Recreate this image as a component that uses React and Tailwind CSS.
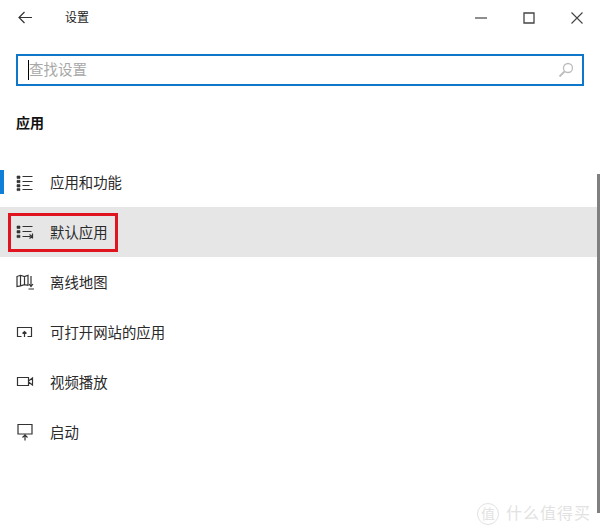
import React from "react";

const cjk = "font-['Liberation_Sans','Noto_Sans_CJK_SC',sans-serif]";

const AppsIcon = () => (
  <svg width="18" height="18" viewBox="0 0 18 18" fill="none" stroke="#333" strokeWidth="1.2">
    <path d="M1 2h3v2.4H1zM1 6.3h3v2.4H1zM1 10.6h3V13H1zM1 14.6h3v2H1z" fill="#333" strokeWidth="0.6" />
    <path d="M6.5 2.5h10M6.5 7.5h10M6.5 11.5h7M6.5 15.5h10" />
  </svg>
);

const DefaultsIcon = () => (
  <svg width="18" height="18" viewBox="0 0 18 18" fill="none" stroke="#333" strokeWidth="1.2">
    <path d="M1 3h3v2.4H1zM1 7.6h3V10H1zM1 12.2h3v2.4H1z" fill="#333" strokeWidth="0.6" />
    <path d="M6.5 3.5h10M6.5 8.5h9M6.5 13.5h8M13.5 11.5l2.5 2-2.5 2M16.5 10.5v5" />
  </svg>
);

const MapIcon = () => (
  <svg width="18" height="18" viewBox="0 0 18 18" fill="none" stroke="#333" strokeWidth="1.2">
    <path d="M1 3.5l3.5-1.2 4 1.2 3.5-1.2v10l-3.5-.6-4 1.2L1 13.5zM4.5 2.5v10.5M8.5 3.5v9" />
    <path d="M15 3v10M13 11l2 2.5 2-2.5M12.5 16h5.5" />
  </svg>
);

const OpenWebIcon = () => (
  <svg width="18" height="18" viewBox="0 0 18 18" fill="none" stroke="#333" strokeWidth="1.2">
    <path d="M5.5 13.5H1.5V4.5h14v9h-4M8.5 14V8.5M6.5 10.5l2-2 2 2" />
  </svg>
);

const VideoIcon = () => (
  <svg width="18" height="18" viewBox="0 0 18 18" fill="none" stroke="#333" strokeWidth="1.2">
    <path d="M1.5 4.5h11v8h-11zM12.5 8l4-3v7l-4-3" />
  </svg>
);

const StartupIcon = () => (
  <svg width="18" height="18" viewBox="0 0 18 18" fill="none" stroke="#333" strokeWidth="1.2">
    <path d="M2 1.5h14v9.5H2zM9 17.5V12M6.5 14.5L9 12l2.5 2.5" />
  </svg>
);

const items = [
  { label: "应用和功能", icon: AppsIcon, height: "h-[49px]" },
  { label: "默认应用", icon: DefaultsIcon, height: "h-[50px]", selected: true },
  { label: "离线地图", icon: MapIcon, height: "h-[50px]" },
  { label: "可打开网站的应用", icon: OpenWebIcon, height: "h-[50px]" },
  { label: "视频播放", icon: VideoIcon, height: "h-[50px]" },
  { label: "启动", icon: StartupIcon, height: "h-[50px]" },
];

const App = () => {
  return (
    <div className={`relative w-[600px] h-[531px] overflow-hidden bg-white text-[#222] ${cjk}`}>
      <div className="flex items-center h-[35px] pl-[18px]">
        <svg width="14" height="13" viewBox="0 0 14 13" fill="none" stroke="#333" strokeWidth="1.2">
          <path d="M14 6.5H1.5M6.5 1L1 6.5 6.5 12" />
        </svg>
        <span className="ml-[33px] text-[12px] leading-none">设置</span>
        <div className="ml-auto flex items-center">
          <svg className="mr-[36px]" width="12" height="2" viewBox="0 0 12 2">
            <path d="M0 1h12" stroke="#444" strokeWidth="1.2" />
          </svg>
          <svg className="mr-[36px]" width="12" height="12" viewBox="0 0 12 12" fill="none">
            <path d="M1 1h10v10H1z" stroke="#444" strokeWidth="1.3" />
          </svg>
          <svg className="mr-[17px]" width="12" height="12" viewBox="0 0 12 12" fill="none">
            <path d="M.5.5l11 11M11.5.5l-11 11" stroke="#444" strokeWidth="1.1" />
          </svg>
        </div>
      </div>

      <div className="flex items-center h-[32px] mt-[19px] mx-[16px] border-2 border-[#0f77c9] pl-[10px] pr-[8px]">
        <span className="w-px h-[20px] bg-black" />
        <span className="text-[14.5px] text-[#a8a8a8] leading-none">查找设置</span>
        <svg className="ml-auto" width="16" height="16" viewBox="0 0 16 16" fill="none" stroke="#bdbdbd" strokeWidth="1.3">
          <circle cx="10" cy="6" r="4.5" />
          <path d="M6.5 9.5L1.5 14.5" strokeWidth="1.8" />
        </svg>
      </div>

      <h2 className="mt-[28px] ml-[16px] text-[14px] leading-[18px] font-bold text-[#111]">应用</h2>

      <ul className="mt-[26px]">
        {items.map((item) => {
          const Icon = item.icon;
          return (
            <li
              key={item.label}
              className={`flex items-center ${item.height} pl-[16px] ${item.selected ? "bg-[#e6e6e6]" : ""}`}
            >
              <Icon />
              <span className="ml-[16px] pt-[2px] text-[14.4px] leading-none text-[#2a2a2a]">{item.label}</span>
            </li>
          );
        })}
      </ul>

      {/* blue marker on the first row */}
      <div className="absolute left-0 top-[170px] w-[4px] h-[24px] bg-[#0f7fd7]" />
      {/* red annotation box round the selected row */}
      <div className="absolute left-[8px] top-[213px] w-[110px] h-[39px] border-[3px] border-[#e0141f]" />
      {/* scrollbar */}
      <div className="absolute right-0 top-[174px] w-[3px] h-[339px] bg-[#808080]" />

      {/* watermark */}
      <div className="absolute left-[477px] top-[503px] flex items-center gap-[7px] text-[#e2e2e2]">
        <span className="flex items-center justify-center w-[22px] h-[22px] rounded-full border border-[#e2e2e2] text-[14px] leading-none">值</span>
        <span className="text-[16px] leading-none tracking-[1px]">什么值得买</span>
      </div>
    </div>
  );
};

export default App;
